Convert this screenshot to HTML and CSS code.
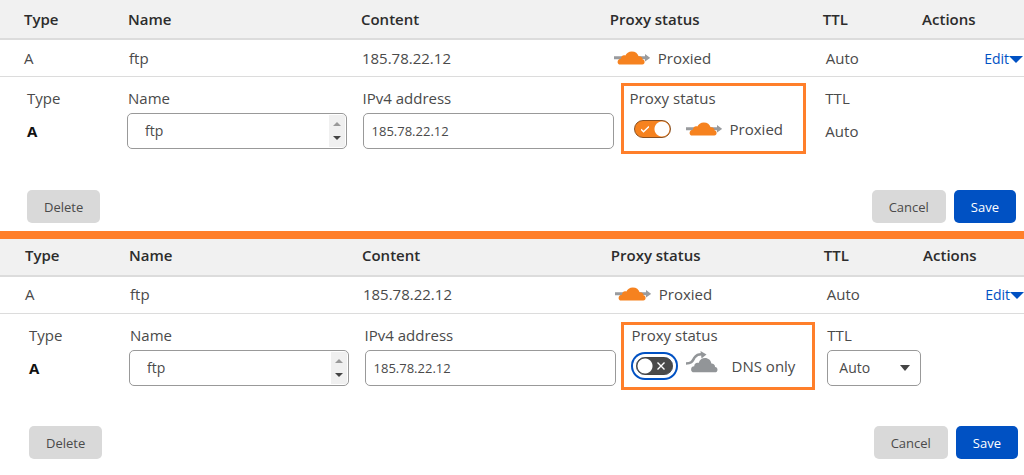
FILE: index.html
```html
<!DOCTYPE html>
<html lang="en">
<head>
  <meta charset="UTF-8" />
  <meta name="viewport" content="width=device-width, initial-scale=1.0"/>
  <title>DNS records</title>
  <link rel="stylesheet" href="styles.css">
</head>
<body>
  <!-- shared icons -->
  <svg class="sprite" aria-hidden="true">
    <symbol id="cloud-proxied" viewBox="0 0 36 14">
      <path d="M0 5.300h31V3l5.200 3.800L31 10.500V8.200H0z" fill="#999b9e"/>
      <path d="M6.200 13.500C4.400 13.500 3.600 12.300 3.600 10.900c0-2 1.400-3.300 3.400-3.200 0-2.600 2-3.900 4.400-3.100C12.300 2 14.700.4 17.800.4c3.500 0 6.100 2 6.800 4.900 2.500-.2 4.100 1.100 4.100 3.300 1.200.3 1.900 1.200 1.900 2.400 0 1.500-.8 2.500-2.300 2.500z" fill="#f6821f"/>
    </symbol>
    <symbol id="cloud-dns" viewBox="0 0 32 22">
      <path d="M0 12.500c7 0 6.500-3.500 9-6.500C10.500 3.800 12 3.200 15.500 3.200" fill="none" stroke="#929598" stroke-width="2.600"/>
      <path d="M14.500 0l6 3.400-5 4z" fill="#929598"/>
      <path d="M8 21.300c-1.900 0-2.900-1.200-2.900-2.900 0-1.900 1.300-3.100 3.100-3.100.1-2.600 2-4 4.400-3.300C13.700 8.700 16 7 19 7c3.300 0 5.900 2.200 6.400 5.600 2.200 0 3.700 1.300 3.700 3.500 1.500.2 2.400 1.200 2.400 2.600 0 1.600-1 2.600-2.600 2.600z" fill="#929598"/>
    </symbol>
  </svg>

  <section class="record">
    <table>
      <thead>
        <tr>
          <th class="col-type">Type</th>
          <th class="col-name">Name</th>
          <th class="col-content">Content</th>
          <th class="col-proxy">Proxy status</th>
          <th class="col-ttl">TTL</th>
          <th class="col-actions">Actions</th>
        </tr>
      </thead>
      <tbody>
        <tr>
          <td class="col-type">A</td>
          <td>ftp</td>
          <td>185.78.22.12</td>
          <td>
            <span class="status"><svg class="cloud"><use href="#cloud-proxied"/></svg>Proxied</span>
          </td>
          <td class="ttl">Auto</td>
          <td class="edit"><a href="#edit-1">Edit<span class="caret"></span></a></td>
        </tr>
      </tbody>
    </table>
    <form id="edit-1">
      <div class="fields">
        <div class="field type">
          <span class="label">Type</span>
          <strong>A</strong>
        </div>
        <div class="field name">
          <label class="label" for="name-1">Name</label>
          <div class="box">
            <input type="text" id="name-1" value="ftp">
            <span class="scroller"></span>
          </div>
        </div>
        <div class="field address">
          <label class="label" for="address-1">IPv4 address</label>
          <input class="box" type="text" id="address-1" value="185.78.22.12">
        </div>
        <div class="proxy">
          <label class="label" for="proxy-1">Proxy status</label>
          <div class="proxy-row">
            <span class="toggle">
              <input type="checkbox" id="proxy-1" checked>
              <svg viewBox="0 0 8 8"><path d="M0 4.200l2.500 2.500L8 1.500"/></svg>
            </span>
            <span class="status"><svg class="cloud"><use href="#cloud-proxied"/></svg>Proxied</span>
          </div>
        </div>
        <div class="field">
          <span class="label">TTL</span>
          <span class="value">Auto</span>
        </div>
      </div>
      <div class="buttons">
        <button type="button">Delete</button>
        <button type="button" class="cancel">Cancel</button>
        <button type="submit" class="save">Save</button>
      </div>
    </form>
  </section>

  <section class="record dns-only">
    <table>
      <thead>
        <tr>
          <th class="col-type">Type</th>
          <th class="col-name">Name</th>
          <th class="col-content">Content</th>
          <th class="col-proxy">Proxy status</th>
          <th class="col-ttl">TTL</th>
          <th class="col-actions">Actions</th>
        </tr>
      </thead>
      <tbody>
        <tr>
          <td class="col-type">A</td>
          <td>ftp</td>
          <td>185.78.22.12</td>
          <td>
            <span class="status"><svg class="cloud"><use href="#cloud-proxied"/></svg>Proxied</span>
          </td>
          <td class="ttl">Auto</td>
          <td class="edit"><a href="#edit-2">Edit<span class="caret"></span></a></td>
        </tr>
      </tbody>
    </table>
    <form id="edit-2">
      <div class="fields">
        <div class="field type">
          <span class="label">Type</span>
          <strong>A</strong>
        </div>
        <div class="field name">
          <label class="label" for="name-2">Name</label>
          <div class="box">
            <input type="text" id="name-2" value="ftp">
            <span class="scroller"></span>
          </div>
        </div>
        <div class="field address">
          <label class="label" for="address-2">IPv4 address</label>
          <input class="box" type="text" id="address-2" value="185.78.22.12">
        </div>
        <div class="proxy">
          <label class="label" for="proxy-2">Proxy status</label>
          <div class="proxy-row">
            <span class="toggle">
              <input type="checkbox" id="proxy-2">
              <svg viewBox="0 0 8 8"><path d="M.5.5l7 7M7.500.5l-7 7"/></svg>
            </span>
            <span class="status"><svg class="cloud-grey"><use href="#cloud-dns"/></svg>DNS only</span>
          </div>
        </div>
        <div class="field">
          <label class="label" for="ttl-2">TTL</label>
          <div class="select">
            <select class="box" id="ttl-2">
              <option>Auto</option>
            </select>
          </div>
        </div>
      </div>
      <div class="buttons">
        <button type="button">Delete</button>
        <button type="button" class="cancel">Cancel</button>
        <button type="submit" class="save">Save</button>
      </div>
    </form>
  </section>
</body>
</html>
```
FILE: styles.css
```css
:root {
  --text: #4a4a4a;
  --dark: #2c2c2c;
  --blue: #0051c3;
  --orange: #ff7f2a;
  --cloud: #f6821f;
  --border: #999;
  --grey: #d9d9d9;
}

* {
  box-sizing: border-box;
}

body {
  margin: 0;
  font: 15px/20px "Open Sans", "Noto Sans", sans-serif;
  background: #fff;
  color: var(--text);
}

.sprite {
  display: none;
}

.record {
  --shift: 0px;
}

.dns-only {
  --shift: 2px;
  border-top: 8px solid var(--orange);
}

/* record table */
table {
  width: 100%;
  table-layout: fixed;
  border-collapse: separate;
  border-spacing: 0;
}

.dns-only table {
  --shift: 1px;
}

th {
  height: 40px;
  padding: 0;
  text-align: left;
  font-weight: 600;
  color: var(--dark);
  background: #f1f1f1;
  border-bottom: 2px solid #dcdcdc;
}

.dns-only th {
  height: 38px;
  padding-bottom: 4px;
}

td {
  height: 37px;
  padding: 0 0 0 1px;
  border-bottom: 1px solid #dcdcdc;
}

.dns-only td {
  padding-bottom: 2px;
}

.col-type {
  width: calc(128px + var(--shift));
  padding-left: calc(24px + var(--shift));
}

.col-name {
  width: 22.75%;
}

.col-content {
  width: 24.3%;
}

.col-proxy {
  width: 20.8%;
}

.col-ttl {
  width: 9.7%;
}

td.ttl {
  padding-left: 3px;
}

td.edit {
  text-align: right;
  padding-right: calc(1px - var(--shift));
}

.edit a {
  color: var(--blue);
  font-size: 14px;
  text-decoration: none;
}

.caret {
  display: inline-block;
  border: 7px solid transparent;
  border-top-color: var(--blue);
  border-bottom: 0;
  vertical-align: 1px;
}

.status {
  display: flex;
  align-items: center;
  gap: 8px;
}

td .status {
  padding-left: 3px;
}

.cloud {
  width: 36px;
  height: 14px;
}

.cloud-grey {
  width: 32px;
  height: 22px;
  margin: 0 6px 8px 0;
}

/* edit form */
form {
  padding: 6px 0 8px;
}

.fields {
  display: grid;
  grid-template-columns: calc(127px + var(--shift)) 23% 25.2% 20% 1fr;
  align-items: start;
}

.field {
  padding-top: 5px;
}

.label {
  display: block;
  margin-bottom: 5px;
}

.type {
  padding-left: calc(27px + var(--shift));
}

.type strong,
.value {
  display: block;
  line-height: 36px;
}

.type strong {
  color: #111;
}

.name .label {
  padding-left: 1px;
}

.name {
  padding-right: 16px;
}

.address {
  padding-right: 7px;
}

.box {
  width: 100%;
  height: 36px;
  border: 1px solid var(--border);
  border-radius: 5px;
  background: #fff;
  color: var(--text);
  font: 13px/20px "Open Sans", "Noto Sans", sans-serif;
}

input.box {
  padding: 0 8px;
}

.name .box {
  display: flex;
  padding: 1px;
}

.name input {
  flex: 1;
  min-width: 0;
  padding: 0 16px;
  border: 0;
  background: none;
  color: inherit;
  font: inherit;
  font-size: 14px;
}

.scroller {
  display: flex;
  flex-direction: column;
  justify-content: space-between;
  align-items: center;
  width: 16px;
  padding: 7px 0;
  background: #f0f0f0;
}

.scroller::before,
.scroller::after {
  content: "";
  border: 4px solid transparent;
}

.scroller::before {
  border-top: 0;
  border-bottom-color: #999;
}

.scroller::after {
  border-bottom: 0;
  border-top-color: #444;
}

/* highlighted proxy status */
.proxy {
  margin-right: 19px;
  padding: 2px 0 6px 6px;
  border: 3px solid var(--orange);
}

.dns-only .proxy {
  margin: 2px 12px 0 -2px;
  padding: 0 0 5px 8px;
}

.proxy-row {
  display: flex;
  align-items: center;
  gap: 15px;
  height: 32px;
  padding-left: 4px;
}

.dns-only .proxy-row {
  gap: 13px;
}

.toggle {
  position: relative;
  display: flex;
}

.toggle input {
  appearance: none;
  width: 37px;
  height: 18px;
  margin: 0;
  border: 1px solid #8a5020;
  border-radius: 9px;
  background: radial-gradient(circle at 27px 8px, #fff 7px, var(--cloud) 8px);
}

.toggle input:not(:checked) {
  border-color: #444;
  background: radial-gradient(circle at 8px 8px, #fff 7px, #4a4a4a 8px);
  box-shadow: 0 0 0 3px #fff, 0 0 0 5px var(--blue);
}

.toggle svg {
  position: absolute;
  top: 5px;
  left: 7px;
  width: 8px;
  height: 8px;
  fill: none;
  stroke: #fff;
  stroke-width: 1.4;
  pointer-events: none;
}

.dns-only .toggle svg {
  left: 21px;
}

.select {
  position: relative;
  width: 94px;
}

.select select {
  appearance: none;
  padding: 0 11px;
  font-size: 14px;
}

.select::after {
  content: "";
  position: absolute;
  top: 15px;
  right: 11px;
  border: 5px solid transparent;
  border-top: 6px solid #444;
  border-bottom: 0;
  pointer-events: none;
}

.buttons {
  display: flex;
  gap: 8px;
  margin-top: 36px;
  padding: 0 calc(8px - var(--shift)) 0 calc(27px + var(--shift));
}

button {
  height: 33px;
  padding: 0 17px;
  border: 0;
  border-radius: 5px;
  background: var(--grey);
  color: var(--text);
  font: 13px/20px "Open Sans", "Noto Sans", sans-serif;
}

.cancel {
  margin-left: auto;
}

.save {
  background: var(--blue);
  color: #fff;
}
```
